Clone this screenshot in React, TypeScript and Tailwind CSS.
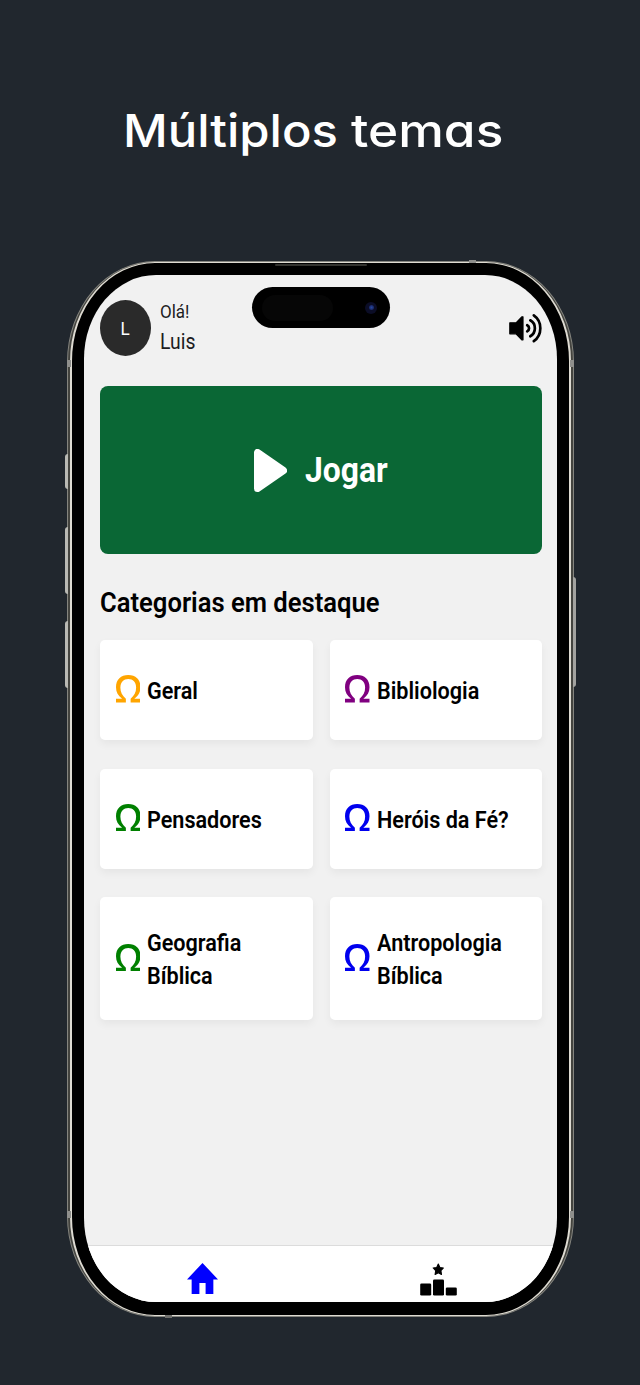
import type { ReactNode } from 'react';

type Category = { name: ReactNode; color: string; tall?: boolean };

const categories: Category[] = [
  { name: 'Geral', color: 'text-[#ffa500]' },
  { name: 'Bibliologia', color: 'text-[#800080]' },
  { name: 'Pensadores', color: 'text-[#008000]' },
  { name: 'Heróis da Fé?', color: 'text-[#0000ee]' },
  { name: <>Geografia<br />Bíblica</>, color: 'text-[#008000]', tall: true },
  { name: <>Antropologia<br />Bíblica</>, color: 'text-[#0000ee]', tall: true },
];

function Omega() {
  return (
    <svg className="mb-[2px] h-[27.5px] w-[24.5px] shrink-0" viewBox="4.85 3.85 14.3 15.15" preserveAspectRatio="none" fill="currentColor">
      <path d="M19.15 19H13.39V16.87C15.5 15.25 16.59 13.24 16.59 10.84C16.59 9.34 16.16 8.16 15.32 7.29C14.47 6.42 13.37 6 12.03 6C10.68 6 9.57 6.42 8.71 7.3C7.84 8.17 7.41 9.37 7.41 10.88C7.41 13.26 8.5 15.26 10.61 16.87V19H4.85V16.87H8.41C6.04 15.32 4.85 13.23 4.85 10.6C4.85 8.5 5.5 6.86 6.81 5.66C8.12 4.45 9.84 3.85 11.97 3.85C14.15 3.85 15.89 4.45 17.19 5.64C18.5 6.83 19.15 8.5 19.15 10.58C19.15 13.21 17.95 15.31 15.55 16.87H19.15V19Z" />
    </svg>
  );
}

function Speaker() {
  return (
    <svg className="mt-[15px] h-[31px] w-[34px]" viewBox="0 0 34 31" fill="none" stroke="#000" strokeWidth="2.7" strokeLinecap="round">
      <path d="M1.8 9.8H8L13.8 3.8H15V26.8H13.8L8 20.8H1.8Z" fill="#000" strokeWidth="1.2" strokeLinejoin="round" />
      <path d="M19.2 12.2C21.7 13.6 21.7 17 19.2 18.4" />
      <path d="M22.3 7.3C28.4 10.6 28.4 20 22.3 23.3" />
      <path d="M25.8 2.4C34.5 8.5 34.5 22.1 25.8 28.2" />
    </svg>
  );
}

function Header() {
  return (
    <header className="flex h-[88.5px] items-start">
      <div className="mt-[2px] flex h-[56px] w-[51px] items-center justify-center rounded-[50%] bg-[#2a2a2a] pt-[3px] text-[19px] text-white">
        <span className="scale-x-90">L</span>
      </div>
      <div className="ml-[8.5px] flex-1 leading-[30px] text-[#1c1c1e]">
        <p className="-mt-px origin-left scale-x-[0.92] text-[18.5px]">Olá!</p>
        <p className="origin-left scale-x-90 text-[21.5px]">Luis</p>
      </div>
      <Speaker />
    </header>
  );
}

function NavBar() {
  return (
    <nav className="grid h-[57px] grid-cols-2 border-t border-[#dcdcdc] bg-white">
      <div className="flex justify-center pt-[17px]">
        <svg className="h-[31px] w-[31px]" viewBox="2 3 20 17" preserveAspectRatio="none" fill="#0000ff">
          <path d="M10 20v-6h4v6h5v-8h3L12 3 2 12h3v8z" />
        </svg>
      </div>
      <div className="flex justify-center pt-[16.5px]">
        <svg className="h-[33px] w-[37px]" viewBox="0 0 37 33" fill="#000">
          <path d="M18.3 1L19.9 4.5L23.4 5L20.9 7.7L21.5 11.5L18.3 9.7L15.1 11.5L15.7 7.7L13.2 5L16.7 4.5Z" stroke="#000" strokeLinejoin="round" strokeWidth="1.1" />
          <rect x=".2" y="20.5" width="11" height="12" rx="1.3" />
          <rect x="13" y="16.5" width="11" height="16" rx="1.3" />
          <rect x="25.8" y="24.5" width="11" height="8" rx="1.3" />
        </svg>
      </div>
    </nav>
  );
}

function Screen() {
  return (
    <main className="flex h-full flex-col overflow-hidden bg-[#f1f1f1] [border-radius:72px/84px]">
      <div className="flex flex-1 flex-col pr-[15px] pl-[16px] pt-[22.5px]">
        <Header />
        <button className="flex h-[168px] w-full shrink-0 items-center justify-center rounded-[8px] bg-[#0a6735] text-white">
          <svg className="h-[43px] w-[33px]" viewBox="0 0 33 43">
            <path d="M3.5 3.5V39.5L29.5 21.5Z" fill="#fff" stroke="#fff" strokeWidth="7" strokeLinejoin="round" />
          </svg>
          <span className="ml-[17.5px] w-[83px] pt-[2px] text-left text-[35px] font-bold whitespace-nowrap">
            <span className="block origin-left scale-x-[0.91]">Jogar</span>
          </span>
        </button>
        <h2 className="mt-[33px] h-[53px] origin-left scale-x-[0.914] text-[28px] leading-[32px] font-semibold whitespace-nowrap text-black">
          Categorias em destaque
        </h2>
        <div className="grid grid-cols-2 gap-x-[17px] gap-y-[28.5px]">
          {categories.map((c, i) => (
            <div
              key={i}
              className={`flex items-center rounded-[5px] bg-white pl-[15.5px] shadow-[0_4px_8px_rgba(0,0,0,0.05)] ${c.color} ${c.tall ? 'h-[122.5px]' : 'h-[100px]'}`}
            >
              <Omega />
              <p className="ml-[7px] origin-left scale-x-90 pt-[3px] text-[24px] leading-[33px] font-semibold whitespace-nowrap text-black">{c.name}</p>
            </div>
          ))}
        </div>
      </div>
      <NavBar />
    </main>
  );
}

export default function App() {
  return (
    <div className="flex h-[1385px] w-[640px] flex-col overflow-hidden bg-[#21272e] font-['Roboto',sans-serif]">
      <h1 className="ml-[123px] flex h-[261px] pt-[101px] text-[45.5px] leading-[60px] font-medium whitespace-pre text-white font-['Inter',sans-serif] [font-feature-settings:'cv11']">
        <span className="block h-[60px] w-[228px] origin-left scale-x-[1.077]">Múltiplos </span>
        <span className="block h-[60px] origin-left scale-x-[1.13]">temas</span>
      </h1>
      <div className="relative ml-[67px] h-[1056px] w-[507px]">
        <i className="absolute top-[193px] -left-[2px] h-[35px] w-[3px] rounded-l-sm bg-[#b9b9b4]" />
        <i className="absolute top-[266px] -left-[2px] h-[67px] w-[3px] rounded-l-sm bg-[#b9b9b4]" />
        <i className="absolute top-[360px] -left-[2px] h-[67px] w-[3px] rounded-l-sm bg-[#b9b9b4]" />
        <i className="absolute top-[316px] -right-[2px] h-[110px] w-[3px] rounded-r-sm bg-[#a3a3a0]" />
        <div className="h-full border border-[#85857f] bg-[#44443f] px-[2px] [border-radius:88px/101px]">
          <div className="h-full border-x-2 border-y border-[#dedbd2] bg-black px-[12px] pt-[12px] pb-[13px] [border-radius:85px/99px]">
            <Screen />
          </div>
        </div>
        <i className="absolute top-[3px] left-[208px] h-[2px] w-[92px] rounded bg-[#33332f]" />
        <i className="absolute -top-px left-[402px] h-[3px] w-[7px] bg-[#8f8f8c]" />
        <i className="absolute -bottom-px left-[98px] h-[3px] w-[7px] bg-[#6f6f6c]" />
        <i className="absolute top-[99px] left-0 h-[7px] w-[4px] bg-[#8f8f8c]" />
        <i className="absolute top-[99px] right-0 h-[7px] w-[4px] bg-[#8f8f8c]" />
        <i className="absolute top-[950px] left-0 h-[7px] w-[4px] bg-[#8f8f8c]" />
        <i className="absolute top-[950px] right-0 h-[7px] w-[4px] bg-[#8f8f8c]" />
        <div className="absolute top-[26px] left-[185px] flex h-[41px] w-[138px] items-center justify-between rounded-full bg-black pr-[13px] pl-[10px]">
          <span className="h-[26px] w-[71px] rounded-full bg-[#060606]" />
          <span className="flex size-[12px] items-center justify-center rounded-full bg-[#0b0d26]">
            <span className="size-[5px] rounded-full bg-[radial-gradient(circle,#27479e,#11184b)]" />
          </span>
        </div>
      </div>
    </div>
  );
}
